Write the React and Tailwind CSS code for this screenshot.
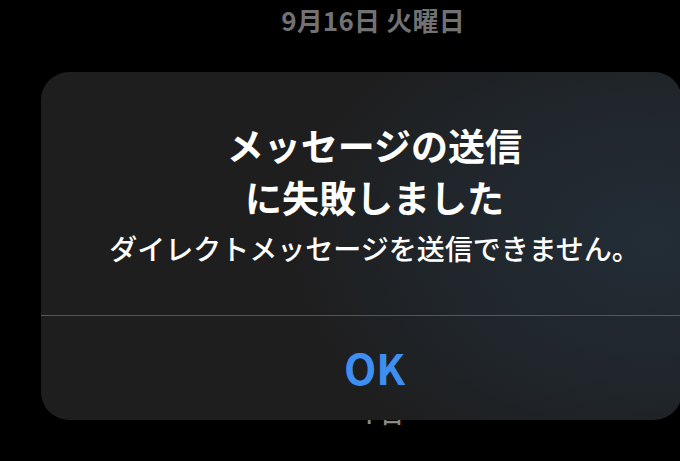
export default function App() {
  const font = { fontFamily: '"Noto Sans CJK JP", "Noto Sans", sans-serif' };
  return (
    <div
      className="relative w-[680px] h-[461px] overflow-hidden bg-black"
      style={font}
    >
      <div className="flex justify-center pl-[66px] pt-[3px]">
        <div className="text-[26px] leading-[34px] font-bold text-[#727272] tracking-[0.2px]">
          9月16日 火曜日
        </div>
      </div>

      <div className="absolute left-[356px] top-[396px] text-[24px] leading-[34px] font-medium text-[#8a8a8a] z-0">
        イ日
      </div>

      <div className="relative z-10 ml-[41px] mt-[35px] w-[641px] h-[348px] rounded-[28px] overflow-hidden bg-[radial-gradient(ellipse_70%_90%_at_95%_48%,#222d36_0%,#20262b_45%,#1e1e1f_80%)] flex flex-col">
        <div className="h-[243px] flex flex-col items-center pt-[47px] pl-[40px] pr-[14px]">
          <div className="text-[37px] leading-[52px] font-bold text-white text-center">
            メッセージの送信
            <br />
            に失敗しました
          </div>
          <div className="mt-[7px] text-[28px] leading-[36px] font-medium text-white text-center whitespace-nowrap">
            ダイレクトメッセージを送信できません。
          </div>
        </div>
        <div className="h-px bg-[#565656]" />
        <div className="flex-1 flex items-center justify-center pl-[40px] pr-[14px]">
          <span className="text-[42px] leading-none font-bold text-[#3d8ff2] pb-[2px]">
            OK
          </span>
        </div>
      </div>
    </div>
  );
}
